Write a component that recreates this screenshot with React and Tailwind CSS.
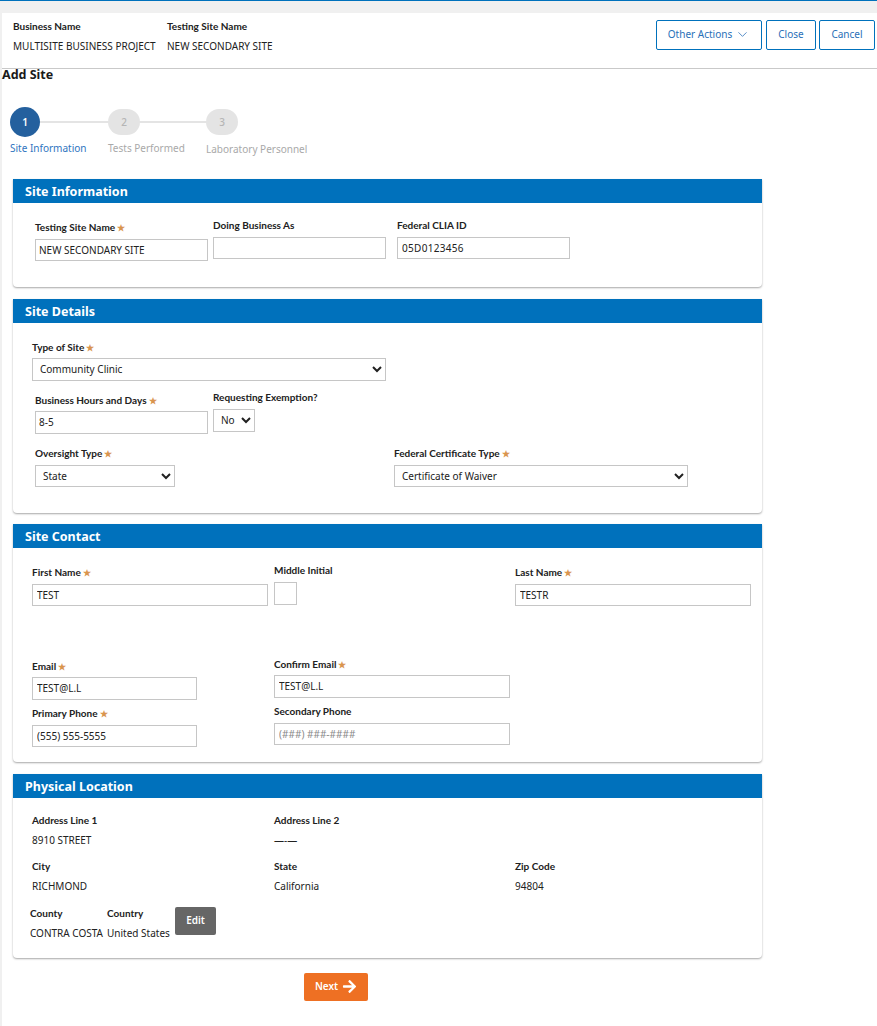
import React from "react";
import { ChevronDown } from "lucide-react";
import { FaArrowRight } from "react-icons/fa";

function Label({ children, req, className = "" }) {
  return (
    <div className={"h-[14px] font-['Lato',sans-serif] text-[10px] leading-[12px] font-bold text-[#212121] whitespace-nowrap " + className}>
      {children}
      {req && <span className="ml-[2px] text-[9px] text-[#d9954f]">★</span>}
    </div>
  );
}

const inputCls =
  "block border border-[#c6c6c6] bg-white pl-[3px] pr-0 pb-[1px] text-[10px] text-[#212121] outline-none placeholder:text-[#8a8a8a] ";

function Card({ title, children, bodyClass = "" }) {
  return (
    <section className="rounded-b-[4px] bg-white shadow-[0_1px_2px_rgba(0,0,0,0.35)]">
      <h2 className="h-[24px] bg-[#0071bc] pt-[1px] pl-[12px] text-[12.5px] leading-[24px] font-bold text-white">{title}</h2>
      <div className={bodyClass}>{children}</div>
    </section>
  );
}

function Info({ label, value, className = "" }) {
  return (
    <div className={className}>
      <Label>{label}</Label>
      <div className="mt-[5px] h-[14px] text-[10px] leading-[14px] text-[#212121] whitespace-nowrap">{value}</div>
    </div>
  );
}

function Step({ n, label, active, className = "", labelClass = "" }) {
  return (
    <div className={"flex flex-col " + className}>
      <div
        className={
          active
            ? "flex h-[30px] w-[30px] items-center justify-center rounded-full bg-[#24609e] text-[10px] font-semibold text-white"
            : "flex h-[26px] w-[32px] mt-[2px] mb-[2px] items-center justify-center rounded-full bg-[#e4e4e4] text-[10px] font-medium text-[#b5b5b5]"
        }
      >
        {n}
      </div>
      <div className={"mt-[4px] text-[10px] leading-[14px] whitespace-nowrap " + (active ? "text-[#2f75c0] " : "text-[#a9a9a9] ") + labelClass}>
        {label}
      </div>
    </div>
  );
}

export default function App() {
  return (
    <div className="min-h-screen w-full overflow-hidden border-t border-[#0071bc] bg-[#f0f0f0] pt-[12px] pl-[2px] font-['Noto_Sans',sans-serif]">
      <div className="min-h-[1013px] bg-white">
        <header className="flex h-[56px] border-b border-[#c9c9c9] pr-[2px]">
          <div className="ml-[11px] mt-[7px] w-[154px]">
            <Label>Business Name</Label>
            <div className="mt-[5px] text-[10px] leading-[14px] text-[#212121] whitespace-nowrap">MULTISITE BUSINESS PROJECT</div>
          </div>
          <div className="mt-[7px]">
            <Label>Testing Site Name</Label>
            <div className="mt-[5px] text-[10px] leading-[14px] text-[#212121] whitespace-nowrap">NEW SECONDARY SITE</div>
          </div>
          <div className="ml-auto mt-[7px] flex h-[30px] gap-[4px] pb-[1px] text-[10px] text-[#2a70b8]">
            <button className="flex h-[30px] w-[106px] items-center justify-center gap-[3px] rounded-[2px] border border-[#0071bc] pb-[1px]">
              Other Actions <ChevronDown size={15} strokeWidth={1.25} />
            </button>
            <button className="h-[30px] w-[50px] rounded-[2px] border border-[#0071bc] pb-[1px]">Close</button>
            <button className="ml-[-1px] h-[30px] w-[56px] rounded-[2px] border border-[#0071bc] pb-[1px]">Cancel</button>
          </div>
        </header>

        <h1 className="h-[12px] text-[12.5px] leading-[12px] font-bold text-[#1a1a1a]">Add Site</h1>

        <div className="relative mt-[26px] ml-[8px] flex h-[48px] items-start">
          <div className="absolute top-[14px] left-[20px] h-[2px] w-[190px] bg-[#e4e4e4]" />
          <Step n="1" label="Site Information" active className="relative w-[98px]" />
          <Step n="2" label="Tests Performed" className="relative w-[98px]" />
          <Step n="3" label="Laboratory Personnel" className="relative" labelClass="mt-[5px]" />
        </div>

        <main className="mt-[24px] ml-[11px] flex w-[749px] flex-col">
          <Card title="Site Information" bodyClass="flex items-start pt-[16px] pl-[22px] pb-[26px]">
            <div className="mt-[2px] w-[178px]">
              <Label req className="mb-[4px]">Testing Site Name</Label>
              <input readOnly value="NEW SECONDARY SITE" className={inputCls + "h-[22px] w-[173px] text-[9.8px]"} />
            </div>
            <div className="w-[184px]">
              <Label className="mb-[4px]">Doing Business As</Label>
              <input readOnly value="" className={inputCls + "h-[22px] w-[173px]"} />
            </div>
            <div>
              <Label className="mb-[4px]">Federal CLIA ID</Label>
              <input readOnly value="05D0123456" className={inputCls + "h-[22px] w-[173px] pl-[4px] text-[10.5px] tracking-[0.3px]"} />
            </div>
          </Card>

          <div className="mt-[12px]">
            <Card title="Site Details" bodyClass="pt-[18px] pb-[26px]">
              <div className="pl-[19px]">
                <Label req className="mb-[3px]">Type of Site</Label>
                <select className={inputCls + "h-[23px] w-[354px]"} defaultValue="c">
                  <option value="c">Community Clinic</option>
                </select>
              </div>
              <div className="mt-[10px] flex items-start pl-[22px]">
                <div className="mt-[3px] w-[178px]">
                  <Label req className="mb-[3px]">Business Hours and Days</Label>
                  <input readOnly value="8-5" className={inputCls + "h-[23px] w-[173px]"} />
                </div>
                <div>
                  <Label className="mb-[4px]">Requesting Exemption?</Label>
                  <select className={inputCls + "h-[23px] w-[42px]"} defaultValue="n">
                    <option value="n">No</option>
                  </select>
                </div>
              </div>
              <div className="mt-[13px] flex items-start pl-[22px]">
                <div className="w-[359px]">
                  <Label req className="mb-[4px]">Oversight Type</Label>
                  <select className={inputCls + "h-[22px] w-[140px]"} defaultValue="s">
                    <option value="s">State</option>
                  </select>
                </div>
                <div>
                  <Label req className="mb-[4px]">Federal Certificate Type</Label>
                  <select className={inputCls + "h-[22px] w-[294px]"} defaultValue="w">
                    <option value="w">Certificate of Waiver</option>
                  </select>
                </div>
              </div>
            </Card>
          </div>

          <div className="mt-[11px]">
            <Card title="Site Contact" bodyClass="pt-[16px] pb-[15px] pl-[19px]">
              <div className="grid grid-cols-[242px_241px_1fr] items-start">
                <div className="mt-[2px]">
                  <Label req className="mb-[4px]">First Name</Label>
                  <input readOnly value="TEST" className={inputCls + "h-[22px] w-[236px] pl-[4px]"} />
                </div>
                <div>
                  <Label className="mb-[4px]">Middle Initial</Label>
                  <input readOnly value="" className={inputCls + "h-[23px] w-[23px]"} />
                </div>
                <div className="mt-[2px]">
                  <Label req className="mb-[4px]">Last Name</Label>
                  <input readOnly value="TESTR" className={inputCls + "h-[22px] w-[236px] pl-[4px]"} />
                </div>
              </div>
              <div className="mt-[52px] grid grid-cols-[242px_241px_1fr] items-start">
                <div className="mt-[2px]">
                  <Label req className="mb-[3px]">Email</Label>
                  <input readOnly value="TEST@L.L" className={inputCls + "h-[23px] w-[165px] pl-[4px]"} />
                </div>
                <div>
                  <Label req className="mb-[3px]">Confirm Email</Label>
                  <input readOnly value="TEST@L.L" className={inputCls + "h-[23px] w-[236px] pl-[4px]"} />
                </div>
              </div>
              <div className="mt-[5px] grid grid-cols-[242px_241px_1fr] items-start">
                <div className="mt-[2px]">
                  <Label req className="mb-[4px]">Primary Phone</Label>
                  <input readOnly value="(555) 555-5555" className={inputCls + "h-[22px] w-[165px] pl-[4px]"} />
                </div>
                <div>
                  <Label className="mb-[4px]">Secondary Phone</Label>
                  <input readOnly placeholder="(###) ###-####" className={inputCls + "h-[22px] w-[236px] pl-[4px]"} />
                </div>
              </div>
            </Card>
          </div>

          <div className="mt-[12px]">
            <Card title="Physical Location" bodyClass="pt-[16px] pb-[18px]">
              <div className="grid grid-cols-[242px_241px_1fr] pl-[19px]">
                <Info label="Address Line 1" value="8910 STREET" />
                <Info label="Address Line 2" value="—-—" />
              </div>
              <div className="mt-[13px] grid grid-cols-[242px_241px_1fr] pl-[19px]">
                <Info label="City" value="RICHMOND" />
                <Info label="State" value="California" />
                <Info label="Zip Code" value="94804" />
              </div>
              <div className="mt-[14px] flex items-start pl-[17px]">
                <Info label="County" value="CONTRA COSTA" className="w-[77px]" />
                <Info label="Country" value="United States" className="w-[68px]" />
                <button className="h-[28px] w-[41px] rounded-[2px] bg-[#666666] pb-[2px] text-[10px] font-semibold text-white">Edit</button>
              </div>
            </Card>
          </div>

          <button className="mt-[15px] ml-[291px] flex h-[28px] w-[64px] items-center justify-center gap-[4px] rounded-[2px] bg-[#ee7023] pb-[2px] text-[10px] font-semibold text-white">
            Next <FaArrowRight size={15} />
          </button>
        </main>
      </div>
    </div>
  );
}
